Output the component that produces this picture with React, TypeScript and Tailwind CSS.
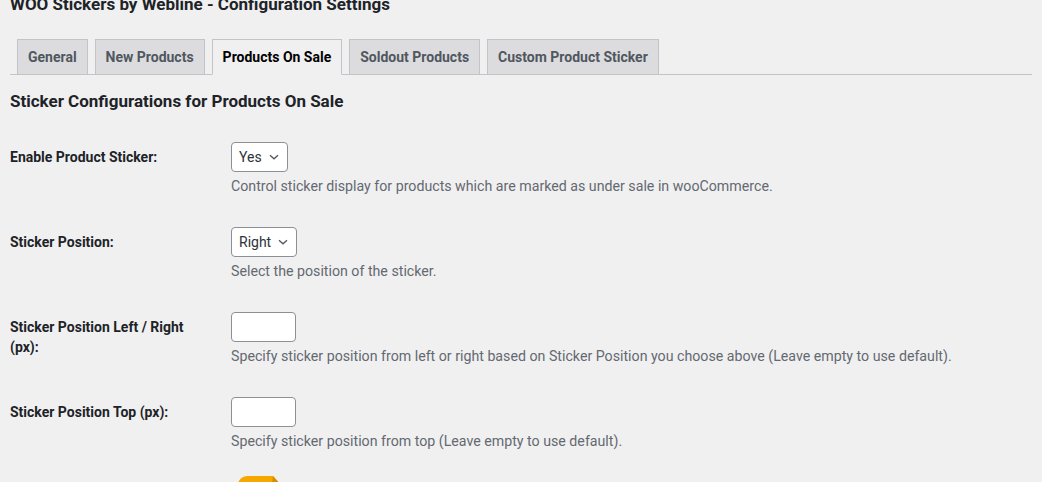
import React from "react";

const tabs = ["General", "New Products", "Products On Sale", "Soldout Products", "Custom Product Sticker"];

function Chevron() {
  return (
    <svg width="10" height="6" viewBox="0 0 10 6" fill="none" className="shrink-0">
      <path d="M1 1.2l4 3.6 4-3.6" stroke="#50575e" strokeWidth="1.3" />
    </svg>
  );
}

function FakeSelect({ value }: { value: string }) {
  return (
    <div className="inline-flex h-[30px] items-center gap-[7px] rounded-[4px] border border-[#8c8f94] bg-white pl-[7px] pr-[8px] text-[14px] leading-none text-[#2c3338]">
      <span>{value}</span>
      <Chevron />
    </div>
  );
}

function TextBox() {
  return <div className="h-[30px] w-[65px] rounded-[4px] border border-[#8c8f94] bg-white" />;
}

function Row({ label, desc, children }: { label: string; desc: string; children: React.ReactNode }) {
  return (
    <div className="flex pt-[15px] pb-[16px]">
      <div className="w-[221px] shrink-0 pt-[5px] pr-[21px] text-[14px] font-bold leading-[20px] text-[#1d2327]">
        {label}
      </div>
      <div>
        {children}
        <p className="mt-[5px] text-[14.2px] leading-[19px] text-[#646970]">{desc}</p>
      </div>
    </div>
  );
}

export default function App() {
  return (
    <div className="h-[482px] overflow-hidden bg-[#f0f0f1] px-[10px] font-['Roboto',sans-serif]">
      <h1 className="mt-[-7px] text-[17px] font-bold leading-[22px] text-[#1d2327]">
        WOO Stickers by Webline - Configuration Settings
      </h1>

      <div className="mt-[24px] flex border-b border-[#c3c4c7]">
        {tabs.map((t) => {
          const active = t === "Products On Sale";
          return (
            <div
              key={t}
              className={`ml-[7px] mb-[-1px] border border-[#c3c4c7] px-[10px] py-[5px] text-[14px] font-bold leading-[24px] ${
                active ? "border-b-[#f0f0f1] bg-[#f0f0f1] text-black" : "bg-[#dcdcde] text-[#50575e]"
              }`}
            >
              {t}
            </div>
          );
        })}
      </div>

      <h2 className="mt-[16px] mb-[16px] text-[17px] font-bold leading-[20px] text-[#1d2327]">
        Sticker Configurations for Products On Sale
      </h2>

      <Row label="Enable Product Sticker:" desc="Control sticker display for products which are marked as under sale in wooCommerce.">
        <FakeSelect value="Yes" />
      </Row>
      <Row label="Sticker Position:" desc="Select the position of the sticker.">
        <FakeSelect value="Right" />
      </Row>
      <Row
        label="Sticker Position Left / Right (px):"
        desc="Specify sticker position from left or right based on Sticker Position you choose above (Leave empty to use default)."
      >
        <TextBox />
      </Row>
      <Row label="Sticker Position Top (px):" desc="Specify sticker position from top (Leave empty to use default).">
        <TextBox />
      </Row>

      <div className="flex pt-[9px]">
        <div className="w-[221px] shrink-0" />
        <svg width="44" height="20" viewBox="0 0 44 20" className="ml-[7px]">
          <path d="M9 0h26l7 8v12H0V9a9 9 0 0 1 9-9z" fill="#f7a800" />
          <path d="M35 0l7 8v12h-10z" fill="#d58e00" />
        </svg>
      </div>
    </div>
  );
}
